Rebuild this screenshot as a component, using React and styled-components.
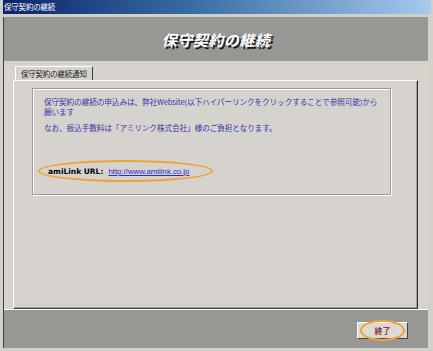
import styled, { createGlobalStyle } from "styled-components";

const GlobalStyle = createGlobalStyle`
  html, body {
    margin: 0;
    padding: 0;
    background: #d4d0c8;
  }
  body {
    font-family: "Noto Sans CJK JP", "Liberation Sans", sans-serif;
  }
`;

const Window = styled.div`
  width: 433px;
  height: 351px;
  box-sizing: border-box;
  background: #d4d0c8;
  padding: 0 5px 3px 3px;
  display: flex;
  flex-direction: column;
`;

const TitleBar = styled.div`
  height: 14px;
  margin-right: -3px;
  background: linear-gradient(to right, #0a246a 0%, #3a6ea5 45%, #a6caf0 100%);
  color: #ffffff;
  font-size: 7.5px;
  line-height: 14px;
  padding-left: 1px;
  margin-bottom: 3px;
  white-space: nowrap;
  letter-spacing: -0.2px;
`;

const Client = styled.div`
  flex: 1;
  display: flex;
  flex-direction: column;
  border-left: 1px solid #404040;
`;

const HeaderBand = styled.div`
  height: 44px;
  background: #979793;
  display: flex;
  align-items: center;
  justify-content: center;
`;

const HeaderTitle = styled.h1`
  margin: 0;
  font-size: 15px;
  font-weight: 700;
  font-style: italic;
  color: #ffffff;
  text-shadow: 2px 2px 0 #1a1a1a;
  letter-spacing: 0.5px;
`;

const Body = styled.div`
  flex: 1;
  display: flex;
  flex-direction: column;
  padding: 5px 10px 0 9px;
  background: #d6d3ce;
`;

const TabStrip = styled.div`
  display: flex;
  padding-left: 2px;
`;

const Tab = styled.div`
  height: 14px;
  box-sizing: border-box;
  padding: 0 5px;
  font-size: 7.5px;
  line-height: 14px;
  color: #202020;
  border-top: 1px solid #ffffff;
  border-left: 1px solid #ffffff;
  border-right: 1px solid #404040;
  background: #d6d3ce;
  letter-spacing: -0.2px;
`;

const TabPanel = styled.div`
  flex: 1;
  border-top: 1px solid #ffffff;
  border-left: 1px solid #ffffff;
  border-right: 1px solid #303030;
  border-bottom: 1px solid #404040;
  box-shadow: inset -1px -1px 0 #a09c96;
  padding: 7px 26px 0 18px;
`;

const GroupBox = styled.div`
  height: 107px;
  box-sizing: border-box;
  border: 1px solid #a09c96;
  box-shadow: inset 1px 1px 0 #ffffff, 1px 1px 0 #ffffff;
  padding: 8px 4px 0 11px;
  display: flex;
  flex-direction: column;
`;

const Notice = styled.p`
  margin: 0 0 6px 0;
  font-size: 7.7px;
  line-height: 10px;
  color: #3838a8;
  letter-spacing: -0.15px;
  white-space: nowrap;
`;

const UrlRow = styled.div`
  margin-top: auto;
  margin-bottom: 12px;
  margin-left: -6px;
  width: 175px;
  height: 22px;
  box-sizing: border-box;
  border: 2px solid #eea33a;
  border-radius: 50%;
  display: flex;
  align-items: center;
  gap: 5px;
  padding-left: 8px;
  font-family: "DejaVu Sans", "Liberation Sans", sans-serif;
  font-size: 7.5px;
`;

const UrlLabel = styled.span`
  font-weight: 700;
  color: #000000;
`;

const UrlLink = styled.a`
  color: #2a2ad0;
  text-decoration: underline;
  font-family: "Liberation Sans", sans-serif;
  font-size: 7.8px;
`;

const FooterBand = styled.div`
  height: 38px;
  background: #979793;
  border-top: 1px solid #ffffff;
  display: flex;
  align-items: center;
  justify-content: flex-end;
  padding-right: 20px;
`;

const CloseButton = styled.button`
  position: relative;
  width: 51px;
  height: 17px;
  padding: 0;
  background: #dcdad6;
  border-top: 1px solid #ffffff;
  border-left: 1px solid #ffffff;
  border-right: 1px solid #404040;
  border-bottom: 1px solid #404040;
  font-family: "Noto Sans CJK JP", sans-serif;
  font-size: 8px;
  font-weight: 700;
  color: #8a3535;
  margin-top: 2px;

  &::after {
    content: "";
    position: absolute;
    left: 2px;
    right: 2px;
    top: -3px;
    bottom: -3px;
    border: 2px solid #eea33a;
    border-radius: 50%;
  }
`;

const App = () => {
  return (
    <>
      <GlobalStyle />
      <Window>
        <TitleBar>保守契約の継続</TitleBar>
        <Client>
          <HeaderBand>
            <HeaderTitle>保守契約の継続</HeaderTitle>
          </HeaderBand>
          <Body>
            <TabStrip>
              <Tab>保守契約の継続通知</Tab>
            </TabStrip>
            <TabPanel>
              <GroupBox>
                <Notice>
                  保守契約の継続の申込みは、弊社Website(以下ハイパーリンクをクリックすることで参照可能)から
                  <br />
                  願います
                </Notice>
                <Notice>なお、振込手数料は「アミリンク株式会社」様のご負担となります。</Notice>
                <UrlRow>
                  <UrlLabel>amiLink URL:</UrlLabel>
                  <UrlLink href="#">http://www.amilink.co.jp</UrlLink>
                </UrlRow>
              </GroupBox>
            </TabPanel>
          </Body>
          <FooterBand>
            <CloseButton>終了</CloseButton>
          </FooterBand>
        </Client>
      </Window>
    </>
  );
};

export default App;
